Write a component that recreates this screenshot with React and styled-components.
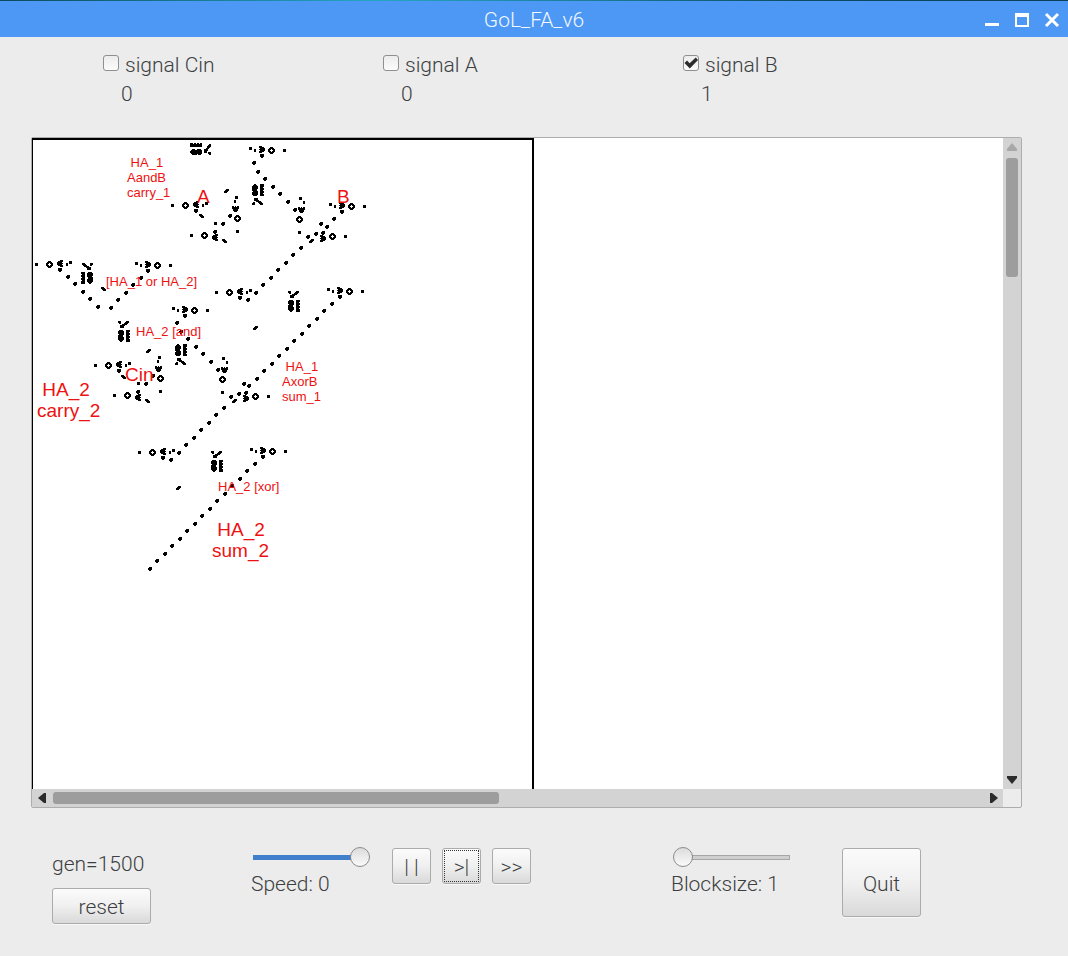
import React, { useState } from "react";
import styled, { createGlobalStyle, css } from "styled-components";

const GlobalStyle = createGlobalStyle`
  *, *::before, *::after { box-sizing: border-box; }
  body {
    margin: 0;
    background: #ececec;
    color: #3c3f42;
    font-family: Roboto, "Liberation Sans", sans-serif;
    font-size: 21px;
    font-weight: 300;
    line-height: 24px;
  }
`;

/* ---------- window ---------- */

const Window = styled.div`
  display: flex;
  flex-direction: column;
  min-height: 100vh;
`;

const DesktopEdge = styled.div`
  height: 1px;
  background: linear-gradient(to right, #0b4a5c, #23a6c4 35%, #1c7d98 55%, #0c4a63 75%, #0c3f58);
`;

const TitleBar = styled.header`
  display: grid;
  grid-template-columns: 1fr auto 1fr;
  align-items: center;
  height: 36px;
  padding: 0 8px;
  background: #4d97f5;
  color: #f2f8ff;
`;

const Title = styled.h1`
  grid-column: 2;
  margin: 0;
  padding-top: 2px;
  font-size: 21px;
  font-weight: 300;
`;

const WindowButtons = styled.div`
  display: flex;
  justify-content: flex-end;
  gap: 14px;
`;

const WindowButton = styled.button`
  display: flex;
  width: 16px;
  height: 16px;
  padding: 0;
  border: 0;
  background: none;
  color: #fff;
`;

/* ---------- signals ---------- */

const Signals = styled.section`
  display: grid;
  grid-template-columns: 280fr 300fr 385fr;
  height: 100px;
  padding: 16px 0 0 103px;
`;

const Signal = styled.div`
  display: flex;
  flex-direction: column;
  gap: 5px;
`;

const SignalLabel = styled.label`
  display: flex;
  align-items: flex-start;
  gap: 6px;
`;

const CheckBox = styled.input`
  appearance: none;
  width: 16px;
  height: 16px;
  margin: 2px 0 0;
  border: 1px solid #8f8f8f;
  border-radius: 3px;
  background: linear-gradient(#ececec, #fcfcfc);
`;

const CheckHolder = styled.span`
  position: relative;
  display: flex;
  svg {
    position: absolute;
    left: 1px;
    top: 3px;
    pointer-events: none;
  }
`;

const SignalValue = styled.output`
  padding-left: 18px;
`;

/* ---------- scrolled canvas ---------- */

const ScrollFrame = styled.main`
  flex: 1 0 auto;
  display: grid;
  grid-template: minmax(440px, 1fr) 18px / minmax(0, 1fr) 18px;
  margin: 0 46px 0 31px;
  border: 1px solid #adadad;
  border-radius: 2px;
`;

const Viewport = styled.div`
  display: flex;
  overflow: hidden;
  background: #fff;
`;

const World = styled.div`
  position: relative;
  flex: 0 0 502px;
  border: solid #000;
  border-width: 2px 2px 0 1px;
`;

const Cells = styled.svg`
  display: block;
`;

const CellLabel = styled.span`
  position: absolute;
  left: ${(p) => p.$x}px;
  top: ${(p) => p.$y}px;
  color: #ee1111;
  font-family: "Liberation Sans", Arial, sans-serif;
  font-weight: 400;
  font-size: ${(p) => (p.$large ? 19 : 13)}px;
  line-height: ${(p) => (p.$large ? 21 : 15)}px;
  white-space: pre;
`;

const ScrollBar = styled.div`
  display: flex;
  flex-direction: ${(p) => (p.$vertical ? "column" : "row")};
  align-items: center;
  justify-content: space-between;
  gap: 7px;
  padding: ${(p) => (p.$vertical ? "5px 0" : "0 5px 0 6px")};
  background: #d3d3d3;
`;

const ScrollTrack = styled.div`
  display: flex;
  flex: 1;
  flex-direction: ${(p) => (p.$vertical ? "column" : "row")};
`;

const ScrollThumb = styled.div`
  flex: 0 0 ${(p) => p.$size}%;
  min-width: 12px;
  min-height: 12px;
  border-radius: 3px;
  background: #9d9d9d;
`;

const ScrollArrow = styled.button`
  display: flex;
  padding: 0;
  border: 0;
  background: none;
  color: ${(p) => (p.disabled ? "#a8a8a8" : "#2b2b2b")};
`;

/* ---------- bottom controls ---------- */

const Controls = styled.footer`
  display: grid;
  grid-template-columns: 199fr 141fr 279fr 171fr 226fr;
  align-items: start;
  height: 148px;
  padding: 40px 0 0 52px;
`;

const Stack = styled.div`
  display: flex;
  flex-direction: column;
  align-items: flex-start;
  gap: 12px;
  padding-top: 4px;
`;

const SliderGroup = styled.div`
  display: flex;
  flex-direction: column;
  align-items: flex-start;
  gap: 5px;
`;

const thumb = css`
  appearance: none;
  width: 20px;
  height: 20px;
  margin-top: -8px;
  border: 1px solid #8b8b8b;
  border-radius: 50%;
  background: linear-gradient(#dcdcdc, #fafafa);
`;

const Slider = styled.input`
  appearance: none;
  width: 117px;
  height: 20px;
  margin: -1px 0 0 2px;
  background: none;
  &::-webkit-slider-runnable-track {
    height: 5px;
    background: ${(p) =>
      p.$filled
        ? "linear-gradient(to right, #3f7fcb calc(100% - 10px), transparent 0)"
        : "linear-gradient(to right, transparent 10px, #a6a6a6 0) 0 0 / 100% 1px no-repeat, linear-gradient(to right, transparent 10px, #a6a6a6 0) 0 100% / 100% 1px no-repeat, linear-gradient(to right, transparent 10px, #cfcfcf 10px calc(100% - 1px), #a6a6a6 0)"};
  }
  &::-webkit-slider-thumb {
    ${thumb}
  }
`;

const ButtonRow = styled.div`
  display: flex;
  gap: 11px;
`;

const Button = styled.button`
  width: ${(p) => p.$width}px;
  height: ${(p) => p.$height || 36}px;
  padding: 2px 0 0;
  border: 1px solid #ababab;
  border-radius: 3px;
  background: linear-gradient(#fbfbfb, #f0f0f0 50%, #d9d9d9);
  box-shadow: 0 1px 0 #f8f8f8;
  color: inherit;
  font: inherit;
  outline: ${(p) => (p.$current ? "1px dotted #333" : "none")};
  outline-offset: -3px;
`;

/* ---------- cell patterns ---------- */

const DOT = ["###", "###", "###"];
const SMALL = ["##", "##", "##"];
const GLIDER = [".###", "####", "####", ".##."];
const WEDGE = ["####", "####", "####", ".##."];
const PAIR = ["..###", ".####", "####.", "###.."];
const RING = ["..###..", ".#####.", "###.###", "##...##", "###.###", ".#####.", "..###.."];
const SHUTTLE = ["###...", "#####.", ".#####", "######", ".#####", "#####.", "###..."];
const EATER = [
  "###.....###.",
  "###....####.",
  ".##...####..",
  "....#####...",
  "..#####.....",
  "..####......",
  "..####......",
  "............",
  "............",
  ".####...####",
  "######..####",
  "######..###.",
  "######..####",
  ".#####..####",
  "#####...###.",
  "#####...####",
  "######..####",
  "######..###.",
  "######..####",
  ".####...####",
  "..##....####",
];

const flipX = (art) => art.map((row) => [...row].reverse().join(""));
const flipY = (art) => [...art].reverse();
const turn = (art) => [...art[0]].map((_, x) => art.map((row) => row[x]).reverse().join(""));

// Path of the art's filled runs, with its top-left cell at (x, y).
const paint = (art, x, y) =>
  art
    .flatMap((row, j) =>
      [...row.matchAll(/#+/g)].map((m) => `M${x + m.index} ${y + j}h${m[0].length}v1h-${m[0].length}z`)
    )
    .join("");

const centred = (art, x, y) =>
  paint(art, Math.floor(x - art[0].length / 2), Math.floor(y - art.length / 2));

const line = (x, y, count, dx, dy) =>
  Array.from({ length: count }, (_, i) => [GLIDER, x + i * dx, y + i * dy]);

const gun = (x, y, side) => [
  [RING, x, y],
  [side < 0 ? SHUTTLE : flipX(SHUTTLE), x + side * 10, y - 1],
  [SMALL, x + side * 17, y],
  [DOT, x + side * 21, y - 2],
  [WEDGE, x + side * 10, y + 5],
  [DOT, x - side * 13, y],
];

const gunLowRight = (x, y) => [
  [RING, x, y],
  [SHUTTLE, x - 10, y + 2],
  [DOT, x + 13, y],
  [GLIDER, x - 10, y - 4],
  [GLIDER, x - 17, y - 3],
  [PAIR, x - 21, y + 4],
  [GLIDER, x - 25, y],
];

const gunLowLeft = (x, y) => [
  [RING, x, y],
  [flipX(SHUTTLE), x + 10, y + 2],
  [DOT, x - 13, y],
  [GLIDER, x + 10, y - 4],
  [flipX(PAIR), x + 20, y + 5],
  [DOT, x + 11, y - 12],
  [GLIDER, x + 18, y - 12],
];

const gunUp = (x, y, shift, gliderShift) => [
  [RING, x, y],
  [turn(SHUTTLE), x + shift, y - 10],
  [SMALL, x + shift + (shift < 0 ? -1 : 2), y - 17],
  [DOT, x + shift + (shift < 0 ? 1 : -1), y - 21],
  [GLIDER, x + gliderShift, y - (shift < 0 ? 3 : 10)],
  [DOT, x, y + 13],
];

const CENTRED_SHAPES = [
  ...gun(272, 151, -1),
  ...gun(352, 207, -1),
  ...gun(350, 292, -1),
  ...gun(158, 266, -1),
  ...gun(195, 311, -1),
  ...gun(273, 452, -1),
  ...gun(50, 265, 1),
  ...gun(186, 206, 1),
  ...gun(109, 366, 1),
  ...gun(230, 293, 1),
  ...gun(153, 453, 1),
  ...gunLowRight(333, 237),
  ...gunLowRight(256, 397),
  ...gunLowLeft(205, 236),
  ...gunLowLeft(128, 396),
  ...gunUp(238, 219, -2, -8),
  ...gunUp(161, 379, -2, -8),
  ...gunUp(300, 220, 2, -5),
  ...gunUp(223, 380, 2, -5),
  [GLIDER, 254, 163],
  ...line(258, 172, 5, 7.5, 7.5),
  [GLIDER, 177, 323],
  ...line(181, 332, 5, 7.5, 7.5),
  [GLIDER, 334, 219],
  [GLIDER, 327, 227],
  [GLIDER, 321, 224],
  ...line(301, 248, 8, -7.5, 7.5),
  ...line(332, 304, 12, -7.5, 7.5),
  [GLIDER, 244, 384],
  ...line(224, 408, 8, -7.5, 7.5),
  ...line(255, 464, 15, -7.5, 7.5),
  ...line(68, 277, 5, 7.5, 7.5),
  ...line(141, 278, 5, -7.5, 7.5),
  [PAIR, 227, 191],
  [PAIR, 256, 328],
  [PAIR, 179, 488],
  [PAIR, 149, 351],
  [flipX(PAIR), 104, 289],
  [flipX(PAIR), 202, 216],
  [flipX(PAIR), 124, 377],
];

const PLACED_SHAPES = [
  [EATER, 288, 291],
  [EATER, 211, 451],
  [EATER, 118, 321],
  [flipX(EATER), 81, 263],
  [flipY(EATER), 252, 184],
  [flipY(EATER), 175, 344],
  [flipY(turn(EATER)), 190, 143],
];

const CELL_PATH =
  CENTRED_SHAPES.map((s) => centred(...s)).join("") + PLACED_SHAPES.map((s) => paint(...s)).join("");

const LABELS = [
  { text: " HA_1\nAandB\ncarry_1", x: 94, y: 15 },
  { text: "[HA_1 or HA_2]", x: 73, y: 134 },
  { text: "HA_2 [and]", x: 103, y: 184 },
  { text: " HA_1\nAxorB\nsum_1", x: 249, y: 219 },
  { text: "HA_2 [xor]", x: 185, y: 339 },
  { text: "A", x: 164, y: 46, large: true },
  { text: "B", x: 304, y: 46, large: true },
  { text: "Cin", x: 92, y: 224, large: true },
  { text: " HA_2\ncarry_2", x: 4, y: 239, large: true },
  { text: " HA_2\nsum_2", x: 179, y: 379, large: true },
];

/* ---------- parts ---------- */

function SignalBox({ name, initial }) {
  const [on, setOn] = useState(initial);
  return (
    <Signal>
      <SignalLabel>
        <CheckHolder>
          <CheckBox type="checkbox" checked={on} onChange={(e) => setOn(e.target.checked)} />
          {on && (
            <svg width="14" height="14" viewBox="0 0 14 14" aria-hidden="true">
              <path d="M0.500 7 3 4.600 5.600 7.200 11.800 1.600 14 4 5.800 12.400z" fill="#2d2d2d" />
            </svg>
          )}
        </CheckHolder>
        {name}
      </SignalLabel>
      <SignalValue>{on ? 1 : 0}</SignalValue>
    </Signal>
  );
}

const ARROWS = {
  left: [8, 10, "M8 0v10H6L0 5 6 0z"],
  right: [8, 10, "M0 0v10h2l6-5-6-5z"],
  up: [10, 8, "M0 8h10V6L5 0 0 6z"],
  down: [10, 8, "M0 0h10v2L5 8 0 2z"],
};

function Arrow({ to, disabled }) {
  const [w, h, d] = ARROWS[to];
  return (
    <ScrollArrow type="button" aria-label={`Scroll ${to}`} disabled={disabled}>
      <svg width={w} height={h} viewBox={`0 0 ${w} ${h}`}>
        <path d={d} fill="currentColor" />
      </svg>
    </ScrollArrow>
  );
}

export default function App() {
  const [speed, setSpeed] = useState(0);
  const [block, setBlock] = useState(1);

  return (
    <>
      <GlobalStyle />
      <Window>
        <DesktopEdge />
        <TitleBar>
          <Title>GoL_FA_v6</Title>
          <WindowButtons>
            <WindowButton type="button" aria-label="Minimize">
              <svg width="16" height="16" viewBox="0 0 16 16">
                <path d="M1 12h14v3H1z" fill="currentColor" />
              </svg>
            </WindowButton>
            <WindowButton type="button" aria-label="Maximize">
              <svg width="16" height="16" viewBox="0 0 16 16">
                <path d="M1 2h14v14H1zM3 6v8h10V6z" fill="currentColor" fillRule="evenodd" />
              </svg>
            </WindowButton>
            <WindowButton type="button" aria-label="Close">
              <svg width="16" height="16" viewBox="0 0 16 16">
                <path d="M2 3l12 12M14 3 2 15" stroke="currentColor" strokeWidth="3" />
              </svg>
            </WindowButton>
          </WindowButtons>
        </TitleBar>

        <Signals>
          <SignalBox name="signal Cin" initial={false} />
          <SignalBox name="signal A" initial={false} />
          <SignalBox name="signal B" initial={true} />
        </Signals>

        <ScrollFrame>
          <Viewport>
            <World>
              <Cells width="499" height="440" viewBox="33 140 499 440" shapeRendering="crispEdges" aria-hidden="true">
                <path d={CELL_PATH} fill="#000" />
              </Cells>
              {LABELS.map((l) => (
                <CellLabel key={l.text} $x={l.x} $y={l.y} $large={l.large}>
                  {l.text}
                </CellLabel>
              ))}
            </World>
          </Viewport>
          <ScrollBar $vertical>
            <Arrow to="up" disabled />
            <ScrollTrack $vertical>
              <ScrollThumb $size={19.5} />
            </ScrollTrack>
            <Arrow to="down" />
          </ScrollBar>
          <ScrollBar>
            <Arrow to="left" />
            <ScrollTrack>
              <ScrollThumb $size={48} />
            </ScrollTrack>
            <Arrow to="right" />
          </ScrollBar>
        </ScrollFrame>

        <Controls>
          <Stack>
            <span>gen=1500</span>
            <Button type="button" $width={99}>reset</Button>
          </Stack>
          <SliderGroup>
            <Slider
              $filled
              id="speed"
              type="range"
              min="-100"
              max="0"
              value={speed}
              onChange={(e) => setSpeed(Number(e.target.value))}
            />
            <label htmlFor="speed">Speed: {speed}</label>
          </SliderGroup>
          <ButtonRow>
            <Button type="button" $width={39}>| |</Button>
            <Button type="button" $width={39} $current>&gt;|</Button>
            <Button type="button" $width={39}>&gt;&gt;</Button>
          </ButtonRow>
          <SliderGroup>
            <Slider
              id="blocksize"
              type="range"
              min="1"
              max="10"
              value={block}
              onChange={(e) => setBlock(Number(e.target.value))}
            />
            <label htmlFor="blocksize">Blocksize: {block}</label>
          </SliderGroup>
          <Button type="button" $width={79} $height={69}>Quit</Button>
        </Controls>
      </Window>
    </>
  );
}
